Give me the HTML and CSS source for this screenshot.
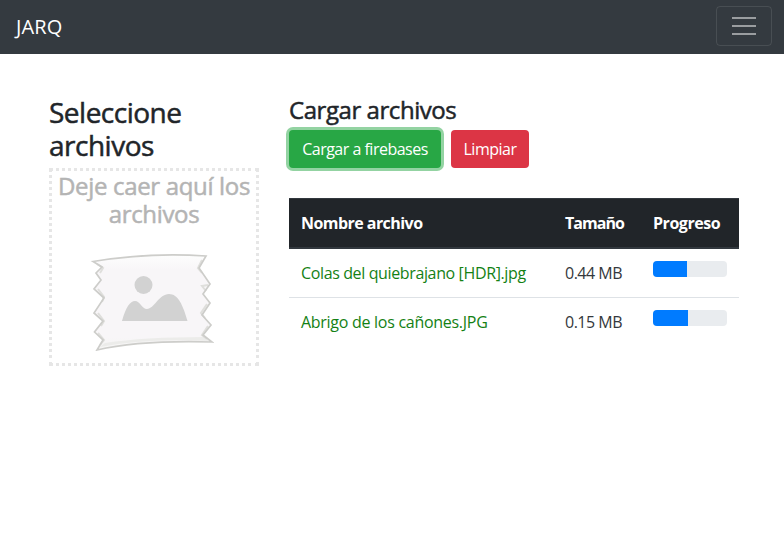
FILE: index.html
```html
<!DOCTYPE html>
<html lang="es">
<head>
<meta charset="utf-8">
<title>JARQ</title>
<link rel="stylesheet" href="styles.css">
</head>
<body>
<nav class="navbar">
  <a class="brand">JARQ</a>
  <button class="toggler" aria-label="Menú">
    <svg width="30" height="30" viewBox="0 0 30 30"><path stroke="rgba(255,255,255,.5)" stroke-width="2" d="M3 7h24M3 15h24M3 23h24"/></svg>
  </button>
</nav>
<main class="content">
  <section class="select">
    <h3 class="title">Seleccione archivos</h3>
    <div class="drop">
      <h4 class="hint">Deje caer aquí los archivos</h4>
      <svg class="picture" width="124" height="100" viewBox="0 0 124 100">
        <defs>
          <linearGradient id="paper" x1="0" y1="0" x2="0" y2="1">
            <stop offset="0" stop-color="#fdfdfd"/><stop offset=".16" stop-color="#f8f6f8"/><stop offset=".86" stop-color="#f8f6f8"/><stop offset="1" stop-color="#f5f5f3"/>
          </linearGradient>
        </defs>
        <path d="M3 10.500Q60 1 116 5L109 17L120 33L113 43L120 52L112 64L121 74L113 84L122 91Q50 89 7 99L13 89L4.500 81L13 70L4 62L14 47L4 38L11 29L6 22L12 16Z" fill="url(#paper)"/>
        <path d="M10 96Q55 87 119 90L114 86Q55 86 15 92Z" fill="#ececea"/>
        <path d="M7 13L13 17L10 22M8 38L14 46L12 51M8 62L14 70L11 75M8 82L14 89L10 94M112 9L108 17L112 22M118 34L112 35L116 40M117 53L111 62L115 67M118 75L112 84L117 88" fill="none" stroke="#dfdfdc" stroke-width="2"/>
        <path d="M3 10.500Q60 1 116 5L109 17L120 33L113 43L120 52L112 64L121 74L113 84L122 91Q50 89 7 99L13 89L4.500 81L13 70L4 62L14 47L4 38L11 29L6 22L12 16Z" fill="none" stroke="#cdcdca" stroke-width="1.700"/>
        <circle cx="53.500" cy="34" r="9" fill="#d2d2d2"/>
        <path d="M32 70C36 56 40 50 45 50C50 50 52 58 57 58C64 58 69 43 79 43C88 43 93 54 97.500 70Z" fill="#d2d2d2"/>
      </svg>
    </div>
  </section>
  <section class="upload">
    <h4 class="subtitle">Cargar archivos</h4>
    <div class="actions">
      <button class="btn btn-success">Cargar a firebases</button>
      <button class="btn btn-danger">Limpiar</button>
    </div>
    <table class="files">
      <colgroup><col class="col-name"><col class="col-size"><col class="col-progress"></colgroup>
      <thead><tr><th>Nombre archivo</th><th class="h-size">Tamaño</th><th class="h-prog">Progreso</th></tr></thead>
      <tbody>
        <tr><td class="name">Colas del quiebrajano [HDR].jpg</td><td class="size">0.44 MB</td><td><div class="progress"><div class="bar" style="width:46%"></div></div></td></tr>
        <tr><td class="name second">Abrigo de los cañones.JPG</td><td class="size">0.15 MB</td><td><div class="progress"><div class="bar" style="width:47.300%"></div></div></td></tr>
      </tbody>
    </table>
  </section>
</main>
</body>
</html>
```
FILE: styles.css
```css
* { box-sizing: border-box; }
body {
  margin: 0;
  background: #fff;
  color: #212529;
  font: 16px/24px "Open Sans", "Noto Sans", sans-serif;
}
.navbar {
  height: 54px;
  padding: 0 12px 2px 16px;
  display: flex;
  align-items: center;
  justify-content: space-between;
  background: #343a40;
}
.brand { color: #fff; font-size: 20px; letter-spacing: .1px; padding-top: 2px; }
.toggler {
  width: 56px;
  height: 40px;
  padding: 4px 12px;
  background: transparent;
  border: 1px solid rgba(255,255,255,.1);
  border-radius: 4px;
}
.toggler svg { display: block; }
.content {
  display: grid;
  grid-template-columns: 210px 450px;
  column-gap: 30px;
  padding: 42px 45px 0 49px;
}
h3, h4 { margin: 0; font-weight: 400; -webkit-text-stroke: .5px currentColor; }
.title { font-size: 28px; line-height: 33px; letter-spacing: -.5px; margin-bottom: 6px; }
.drop {
  height: 198px;
  border: 3px dotted #e6e6e6;
  text-align: center;
}
.hint { font-size: 24px; line-height: 28px; color: #b4b4b4; letter-spacing: -.33px; padding-top: 1px; }
.picture { display: block; margin: 23px auto 0 38px; }
.subtitle { font-size: 24px; line-height: 27px; letter-spacing: -.44px; margin-bottom: 7px; }
.actions { display: flex; gap: 10px; margin-bottom: 30px; }
.btn {
  height: 38px;
  padding: 0;
  border: 0;
  border-radius: 4px;
  color: #fff;
  font: inherit;
  white-space: nowrap;
  letter-spacing: -.5px;
}
.btn-success { width: 152px; background: #28a745; box-shadow: 0 0 0 3px #93d3a2; }
.btn-danger { width: 78px; background: #dc3545; }
.files { width: 450px; table-layout: fixed; border-collapse: separate; border-spacing: 0; }
.col-name { width: 264px; }
.col-size { width: 88px; }
.col-progress { width: 98px; }
th, td { padding: 12px; text-align: left; vertical-align: top; white-space: nowrap; }
th {
  height: 51px;
  background: #212529;
  color: #fff;
  font-weight: 700;
  border-top: 1px solid #32383e;
  border-bottom: 2px solid #32383e;
  letter-spacing: -.55px;
}
.h-size { letter-spacing: -.95px; }
.h-prog { letter-spacing: -.45px; }
td { height: 48px; color: #34383c; }
tbody tr + tr td { border-top: 1px solid #dee2e6; }
td.name { color: #148114; letter-spacing: -.37px; }
td.second { letter-spacing: -.28px; }
.size { letter-spacing: -.5px; }
.progress { height: 16px; border-radius: 4px; background: #e9ecef; overflow: hidden; }
.bar { height: 100%; background: #007bff; }
```
